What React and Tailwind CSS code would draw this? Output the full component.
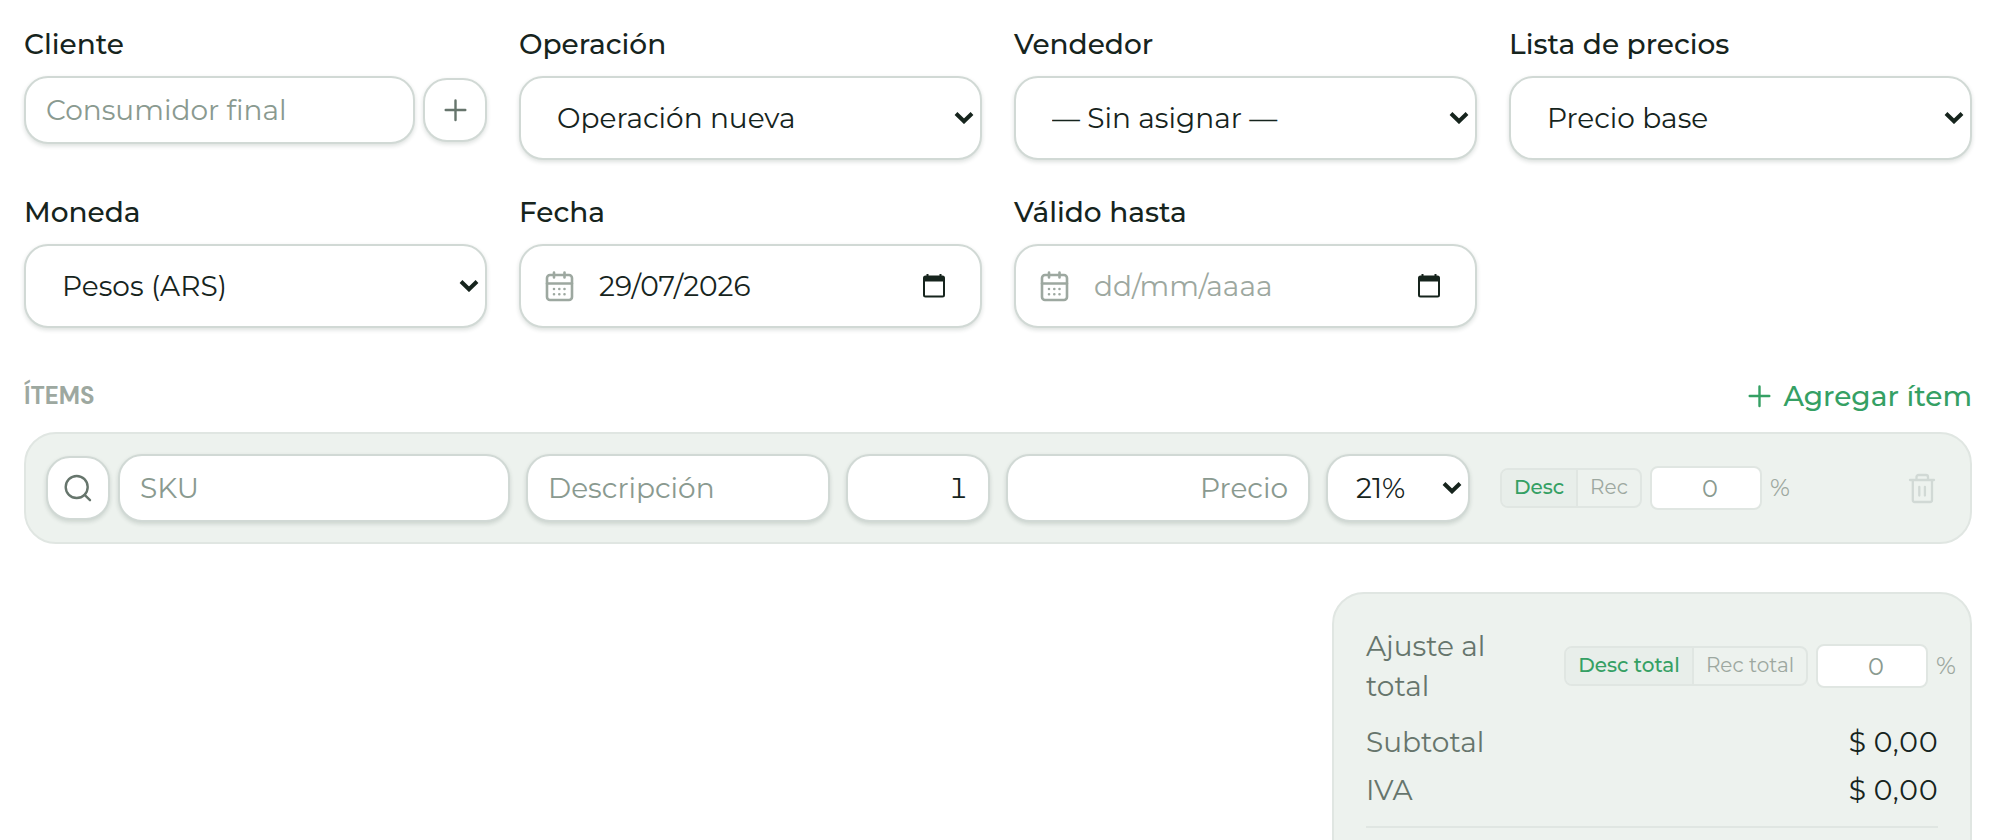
const control =
  "w-full min-w-0 rounded-3xl border-2 border-[#d1d9d5] bg-white text-[28px] leading-10 text-[#16241d] shadow-[0_2px_4px_rgba(22,48,36,0.15)] outline-none placeholder:text-[#8a9a90]";
const iconButton =
  "flex size-16 shrink-0 items-center justify-center rounded-3xl border-2 border-[#d1d9d5] bg-white text-[#66756c] shadow-[0_2px_4px_rgba(22,48,36,0.15)]";

function PlusIcon() {
  return (
    <svg className="size-6" viewBox="0 0 24 24" fill="none" stroke="currentColor" strokeWidth="2.4" strokeLinecap="round">
      <path d="M12.500 2.500v19.500M2.700 12h19.600" />
    </svg>
  );
}

function SearchIcon() {
  return (
    <svg className="size-7" viewBox="0 0 28 28" fill="none" stroke="currentColor" strokeWidth="2.4" strokeLinecap="round">
      <circle cx="12.7" cy="13" r="11" />
      <path d="M20.6 20.9l5.4 5.3" />
    </svg>
  );
}

function TrashIcon() {
  return (
    <svg className="size-8" viewBox="0 0 32 32" fill="none" stroke="currentColor" strokeWidth="2.300" strokeLinecap="round" strokeLinejoin="round">
      <path d="M4 8h24M10.500 8V5a2 2 0 0 1 2-2h7.500a2 2 0 0 1 2 2v3M6.800 8v20a2 2 0 0 0 2 2h15.200a2 2 0 0 0 2-2V8M13.300 15v8.500M18.900 15v8.500" />
    </svg>
  );
}

function CalendarIcon() {
  return (
    <svg
      className="pointer-events-none absolute left-6 top-1/2 size-8 -translate-y-1/2 text-[#9da8a0]"
      viewBox="0 0 32 32"
      fill="none"
      stroke="currentColor"
      strokeWidth="2.6"
      strokeLinecap="round"
      strokeLinejoin="round"
    >
      <rect x="4" y="5" width="25" height="25" rx="3" />
      <path d="M4 13.500h25M11 2.500v5M21.500 2.500v5" />
      <path d="M11 19h.01M16.300 19h.01M21.500 19h.01M11 24.300h.01M16.300 24.300h.01M21.500 24.300h.01" />
    </svg>
  );
}

function Field({ id, label, children }) {
  return (
    <div className="flex flex-col gap-3">
      <label htmlFor={id} className="text-[28px] leading-10 font-medium text-[#16241d]">
        {label}
      </label>
      {children}
    </div>
  );
}

function Chevron() {
  return (
    <svg
      className="pointer-events-none absolute right-2 top-1/2 h-3 w-5 -translate-y-1/2 text-[#16241d]"
      viewBox="0 0 20 12"
      fill="none"
      stroke="currentColor"
      strokeWidth="4"
    >
      <path d="M2 1.500l8 7.800 8-7.800" />
    </svg>
  );
}

function SelectField({ id, label, option }) {
  return (
    <Field id={id} label={label}>
      <div className="relative">
        <select id={id} className={`${control} h-[84px] appearance-none pl-9 pr-9`}>
          <option>{option}</option>
        </select>
        <Chevron />
      </div>
    </Field>
  );
}

function DateField({ id, label, value }) {
  return (
    <Field id={id} label={label}>
      <div className="relative">
        <CalendarIcon />
        <input
          id={id}
          type="text"
          inputMode="numeric"
          placeholder="dd/mm/aaaa"
          defaultValue={value}
          className={`${control} h-[84px] pl-[78px] pr-20 placeholder:text-[#9da8a0]`}
        />
        <button
          type="button"
          aria-label="Abrir calendario"
          className="absolute right-9 top-1/2 -translate-y-1/2 text-[#16241d]"
        >
          <svg className="size-6" viewBox="0 0 24 24" fill="none" stroke="currentColor" strokeWidth="2">
            <rect x="2" y="2.500" width="20" height="20" rx="1.500" />
            <path d="M2 5h20" strokeWidth="5" />
            <path d="M5.500 0v3M18.500 0v3" />
          </svg>
        </button>
      </div>
    </Field>
  );
}

function Adjustment({ first, second, firstWidth, secondWidth, inputLabel }) {
  return (
    <div className="flex shrink-0 items-center gap-2">
      <div className="flex h-10 overflow-hidden rounded-lg border-2 border-[#e0e6e2] text-xl leading-7">
        <button
          type="button"
          className={`${firstWidth} border-r-2 border-[#e0e6e2] bg-[#e8eeea] pb-0.5 font-medium whitespace-nowrap text-[#35a064]`}
        >
          {first}
        </button>
        <button type="button" className={`${secondWidth} pb-0.5 whitespace-nowrap text-[#9da8a0]`}>
          {second}
        </button>
      </div>
      <input
        type="text"
        aria-label={inputLabel}
        placeholder="0"
        className="h-11 w-28 rounded-lg border-2 border-[#e0e6e2] bg-white pl-2 text-center text-2xl text-[#16241d] outline-none placeholder:text-[#8a9a90]"
      />
      <span className="text-2xl text-[#9da8a0]">%</span>
    </div>
  );
}

function SummaryRow({ label, value }) {
  return (
    <div className="flex justify-between">
      <span className="text-[#66756c]">{label}</span>
      <span className="tabular-nums">{value}</span>
    </div>
  );
}

export default function App() {
  return (
    <main className="h-screen overflow-hidden bg-white px-6 pt-6 font-['Montserrat','Inter',sans-serif] text-[#16241d]">
      <form>
        <div className="grid grid-cols-4 gap-8">
          <Field id="cliente" label="Cliente">
            <div className="flex items-center gap-2">
              <input
                id="cliente"
                type="text"
                placeholder="Consumidor final"
                className={`${control} h-[68px] px-5`}
              />
              <button type="button" aria-label="Nuevo cliente" className={iconButton}>
                <PlusIcon />
              </button>
            </div>
          </Field>
          <SelectField id="operacion" label="Operación" option="Operación nueva" />
          <SelectField id="vendedor" label="Vendedor" option="— Sin asignar —" />
          <SelectField id="lista" label="Lista de precios" option="Precio base" />
          <SelectField id="moneda" label="Moneda" option="Pesos (ARS)" />
          <DateField id="fecha" label="Fecha" value="29/07/2026" />
          <DateField id="valido" label="Válido hasta" />
        </div>

        <div className="mt-12 flex items-center justify-between">
          <h2 className="font-['DM_Sans','Inter',sans-serif] text-2xl leading-10 font-bold text-[#9da8a0]">
            ÍTEMS
          </h2>
          <button type="button" className="flex items-center gap-3 text-[28px] leading-10 font-medium text-[#35a064]">
            <PlusIcon />
            Agregar ítem
          </button>
        </div>

        <div className="mt-4 grid grid-cols-12 items-center gap-4 rounded-4xl border-2 border-[#e0e6e2] bg-[#edf2ee] p-5">
          <div className="col-span-3 flex items-center gap-2">
            <button type="button" aria-label="Buscar producto" className={iconButton}>
              <SearchIcon />
            </button>
            <input type="text" aria-label="SKU" placeholder="SKU" className={`${control} h-[68px] px-5`} />
          </div>
          <input
            type="text"
            aria-label="Descripción"
            placeholder="Descripción"
            className={`${control} col-span-2 h-[68px] px-5`}
          />
          <input
            type="text"
            aria-label="Cantidad"
            defaultValue="1"
            className={`${control} h-[68px] px-5 text-right tabular-nums`}
          />
          <input
            type="text"
            aria-label="Precio"
            placeholder="Precio"
            className={`${control} col-span-2 h-[68px] px-5 text-right`}
          />
          <div className="relative">
            <select aria-label="IVA" className={`${control} h-[68px] appearance-none pl-7 pr-8`}>
              <option>21%</option>
            </select>
            <Chevron />
          </div>
          <div className="col-span-3 flex items-center justify-between pl-3.5">
            <Adjustment
              first="Desc"
              second="Rec"
              firstWidth="w-[76px]"
              secondWidth="w-[62px]"
              inputLabel="Porcentaje del ítem"
            />
            <button
              type="button"
              aria-label="Eliminar ítem"
              className="flex size-14 items-center justify-center text-[#d1d9d5]"
            >
              <TrashIcon />
            </button>
          </div>
        </div>

        <div className="mt-12 ml-auto flex w-[640px] flex-col gap-2 rounded-4xl border-2 border-[#e0e6e2] bg-[#edf2ee] px-8 pt-8 pb-20 text-[28px] leading-10">
          <div className="mb-2 flex items-center">
            <span className="mr-[54px] w-36 shrink-0 text-[#66756c]">Ajuste al total</span>
            <Adjustment
              first="Desc total"
              second="Rec total"
              firstWidth="w-32"
              secondWidth="w-28"
              inputLabel="Porcentaje del total"
            />
          </div>
          <SummaryRow label="Subtotal" value="$ 0,00" />
          <SummaryRow label="IVA" value="$ 0,00" />
          <hr className="mt-2 border-t-2 border-[#e0e6e2]" />
        </div>
      </form>
    </main>
  );
}
